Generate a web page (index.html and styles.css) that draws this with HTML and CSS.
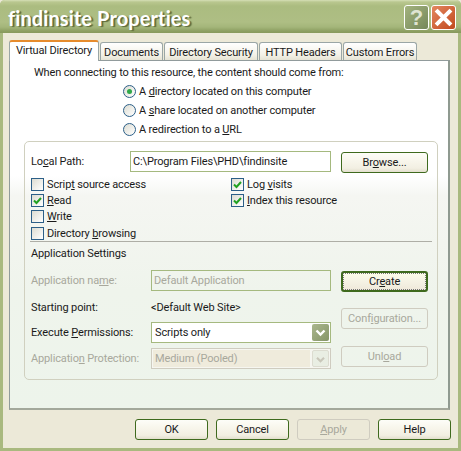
FILE: index.html
```html
<!DOCTYPE html>
<html lang="en">
<head>
    <meta charset="UTF-8">
    <meta name="viewport" content="width=device-width, initial-scale=1.0">
    <title>findinsite Properties</title>
    <link rel="stylesheet" href="styles.css">
</head>
<body>
    <div class="window">
        <div class="titlebar">
            <span class="title">findinsite Properties</span>
            <button class="cap-btn help-btn">?</button>
            <button class="cap-btn close-btn">
                <svg width="21" height="21" viewBox="0 0 21 21"><path d="M4.5 4.5 L16.5 16.5 M16.5 4.5 L4.5 16.5" stroke="#fff" stroke-width="4" stroke-linecap="square"/></svg>
            </button>
        </div>

        <div class="client">
            <div class="tabs">
                <div class="tab tab-virtual active">Virtual Directory</div>
                <div class="tab tab-docs">Documents</div>
                <div class="tab tab-security">Directory Security</div>
                <div class="tab tab-http">HTTP Headers</div>
                <div class="tab tab-errors">Custom Errors</div>
            </div>

            <div class="panel">
                <p class="intro">When connecting to this resource, the content should come from:</p>
                <div class="radios">
                    <label class="radio-row"><span class="radio checked"></span><span>A <u>d</u>irectory located on this computer</span></label>
                    <label class="radio-row"><span class="radio"></span><span>A <u>s</u>hare located on another computer</span></label>
                    <label class="radio-row"><span class="radio"></span><span>A redirection to a <u>U</u>RL</span></label>
                </div>

                <div class="group">
                    <div class="path-row">
                        <span class="path-label">Lo<u>c</u>al Path:</span>
                        <div class="field path-field">C:\Program Files\PHD\findinsite</div>
                        <button class="btn">Br<u>o</u>wse...</button>
                    </div>

                    <div class="checks">
                        <label class="check-row"><span class="check"></span><span>Scrip<u>t</u> source access</span></label>
                        <label class="check-row"><span class="check checked"><svg width="11" height="11" viewBox="0 0 11 11"><path d="M2 5.5 L4.5 8 L9 3" fill="none" stroke="#21a121" stroke-width="2"/></svg></span><span>Log <u>v</u>isits</span></label>
                        <label class="check-row"><span class="check checked"><svg width="11" height="11" viewBox="0 0 11 11"><path d="M2 5.5 L4.5 8 L9 3" fill="none" stroke="#21a121" stroke-width="2"/></svg></span><span><u>R</u>ead</span></label>
                        <label class="check-row"><span class="check checked"><svg width="11" height="11" viewBox="0 0 11 11"><path d="M2 5.5 L4.5 8 L9 3" fill="none" stroke="#21a121" stroke-width="2"/></svg></span><span><u>I</u>ndex this resource</span></label>
                        <label class="check-row"><span class="check"></span><span><u>W</u>rite</span></label>
                        <span></span>
                        <label class="check-row"><span class="check"></span><span>Directory <u>b</u>rowsing</span></label>
                    </div>

                    <div class="separator"></div>
                    <div class="group-title">Application Settings</div>

                    <div class="app-settings">
                        <div class="app-rows">
                            <div class="app-row row-name">
                                <span class="app-label disabled">Application na<u>m</u>e:</span>
                                <div class="field app-field disabled">Default Application</div>
                            </div>
                            <div class="app-row row-start">
                                <span class="app-label">Starting point:</span>
                                <span>&lt;Default Web Site&gt;</span>
                            </div>
                            <div class="app-row row-exec">
                                <span class="app-label">Execute <u>P</u>ermissions:</span>
                                <div class="field app-field select">
                                    <span>Scripts only</span>
                                    <span class="arrow"><svg width="17" height="17" viewBox="0 0 17 17"><path d="M4.5 6.5 L8.5 10.5 L12.5 6.5" fill="none" stroke="#fff" stroke-width="2.4"/></svg></span>
                                </div>
                            </div>
                            <div class="app-row row-prot">
                                <span class="app-label disabled">Applicatio<u>n</u> Protection:</span>
                                <div class="field app-field select locked">
                                    <span class="locked-value">Medium (Pooled)</span>
                                    <span class="arrow"><svg width="17" height="17" viewBox="0 0 17 17"><path d="M4.5 6.5 L8.5 10.5 L12.5 6.5" fill="none" stroke="#c9c7ba" stroke-width="2.4"/></svg></span>
                                </div>
                            </div>
                        </div>
                        <div class="app-buttons">
                            <button class="btn default">Cr<u>e</u>ate</button>
                            <button class="btn off">Conf<u>i</u>guration...</button>
                            <button class="btn off">Unl<u>o</u>ad</button>
                        </div>
                    </div>
                </div>
            </div>

            <div class="footer">
                <button class="btn foot-btn">OK</button>
                <button class="btn foot-btn">Cancel</button>
                <button class="btn foot-btn off"><u>A</u>pply</button>
                <button class="btn foot-btn">Help</button>
            </div>
        </div>
    </div>
</body>
</html>
```

FILE: styles.css
```css
* {
  box-sizing: border-box;
}

body {
  margin: 0;
  font-family: Roboto, "Liberation Sans", Arial, sans-serif;
  font-size: 11px;
  letter-spacing: -0.14px;
  color: #1a1a1a;
  background-color: #ece9d8;
}

u {
  text-underline-offset: 1px;
}

.window {
  width: 461px;
  height: 451px;
  display: flex;
  flex-direction: column;
  background-color: #a9b97f;
  border-radius: 5px 5px 0 0;
  overflow: hidden;
}

.titlebar {
  height: 33px;
  flex: none;
  display: flex;
  align-items: center;
  padding: 2px 5px 0 8px;
  background: linear-gradient(#d6dfb6 0, #b9c78f 2px, #abbc80 6px, #aebe84 22px, #a4b67a 27px, #8d9f62 31px, #87995c 33px);
}

.title {
  flex: 1;
  font-family: Lato, sans-serif;
  font-size: 20px;
  font-weight: 700;
  letter-spacing: 0.1px;
  font-variant-ligatures: none;
  color: #fff;
  text-shadow: 2px 1px 1px #5f6c3c;
}

.cap-btn {
  width: 25px;
  height: 25px;
  margin: 0 0 0 2px;
  padding: 0;
  display: flex;
  align-items: center;
  justify-content: center;
  border: 1px solid #fff;
  border-radius: 3px;
  color: #fff;
}

.help-btn {
  font-family: "Liberation Sans", Arial, sans-serif;
  font-size: 22px;
  font-weight: bold;
  color: #dfe4d2;
  background: linear-gradient(135deg, #a3b37e, #75875a);
}

.close-btn {
  background: linear-gradient(135deg, #e3875f, #c2491f);
}

.client {
  flex: 1;
  margin: 0 3px 3px;
  padding: 8px 0 0 6px;
  display: flex;
  flex-direction: column;
  background-color: #ece9d8;
}

.tabs {
  height: 19px;
  display: flex;
  align-items: flex-end;
  position: relative;
  z-index: 1;
}

.tab {
  height: 18px;
  margin-right: 1px;
  padding-top: 1px;
  display: flex;
  align-items: center;
  justify-content: center;
  background: linear-gradient(#fff, #f3f1e7 70%, #e6e3d4);
  border: 1px solid #9aa6a6;
  border-bottom: none;
  border-radius: 3px 3px 0 0;
}

.tab-virtual {
  width: 90px;
}

.tab-docs {
  width: 63px;
}

.tab-security {
  width: 94px;
}

.tab-http {
  width: 83px;
}

.tab-errors {
  width: 74px;
}

.tab.active {
  height: 21px;
  margin-bottom: -1px;
  padding-top: 0;
  padding-bottom: 3px;
  background: #fff;
  border-top: 2px solid #e68b2c;
}

.panel {
  width: 441px;
  height: 350px;
  padding: 5px 0 0 14px;
  background: linear-gradient(#fff 0, #fff 115px, #f5f6f2 135px, #eff4ec 230px, #edf4eb 100%);
  border: 1px solid #919b9c;
  border-right: 2px solid #8f9a90;
  border-bottom: 2px solid #a3a89b;
}

.intro {
  margin: 0 0 2px 10px;
  height: 14px;
  line-height: 14px;
}

.radios {
  margin-left: 99px;
}

.radio-row {
  height: 19px;
  display: flex;
  align-items: center;
}

.radio {
  width: 13px;
  height: 13px;
  margin-right: 3px;
  display: flex;
  align-items: center;
  justify-content: center;
  border: 1px solid #2c5f88;
  border-radius: 50%;
  background: linear-gradient(135deg, #dcdcd2, #fff);
}

.radio.checked::after {
  content: "";
  width: 5px;
  height: 5px;
  border-radius: 50%;
  background-color: #2fa84a;
}

.group {
  width: 414px;
  height: 239px;
  margin-top: 2px;
  padding: 9px 5px 0 6px;
  border: 1px solid #d0d0bf;
  border-radius: 5px;
}

.path-row {
  height: 22px;
  display: flex;
  align-items: flex-start;
}

.path-label {
  width: 99px;
  line-height: 21px;
}

.field {
  height: 21px;
  padding: 0 2px;
  display: flex;
  align-items: center;
  background-color: #fff;
  border: 1px solid #a5b97f;
}

.path-field {
  width: 201px;
  margin-right: 10px;
}

.btn {
  width: 87px;
  height: 21px;
  padding: 0;
  font-family: inherit;
  font-size: inherit;
  letter-spacing: inherit;
  color: #1a1a1a;
  background: linear-gradient(#fdfdf8 0, #f8f6ec 40%, #f2efe2 80%, #e3dfce 100%);
  border: 1px solid #3f6a1e;
  border-radius: 3px;
}

.path-row .btn {
  margin-top: 1px;
}

.btn.default {
  border-width: 2px;
  outline: 1px dotted #777;
  outline-offset: -3px;
  background: linear-gradient(#fdfde8 0, #f5f2e4 50%, #efe9da 100%);
}

.btn.off {
  color: #a8a89c;
  background: transparent;
  border-color: #cfccc0;
}

.checks {
  margin-top: 3px;
  display: grid;
  grid-template-columns: 200px 1fr;
  grid-auto-rows: 16.33px;
}

.check-row {
  display: flex;
  align-items: center;
}

.check {
  width: 13px;
  height: 13px;
  margin-right: 3px;
  display: flex;
  align-items: center;
  justify-content: center;
  border: 1px solid #2c5f88;
  background: linear-gradient(135deg, #dcdcd2, #fff);
}

.separator {
  width: 402px;
  height: 1px;
  margin: 0 0 0 -1px;
  background-color: #aeaea6;
}

.group-title {
  height: 14px;
  margin-top: 5px;
  line-height: 14px;
}

.app-settings {
  margin-top: 9px;
  display: flex;
  gap: 10px;
}

.app-rows {
  width: 300px;
}

.app-row {
  display: flex;
  align-items: center;
}

.row-name {
  height: 21px;
}

.row-start {
  height: 18px;
  margin-top: 7px;
}

.row-exec {
  height: 21px;
  margin-top: 6px;
}

.row-prot {
  height: 21px;
  margin-top: 5px;
}

.app-label {
  width: 120px;
}

.disabled {
  color: #a8a89c;
}

.app-field {
  width: 180px;
}

.app-field.disabled {
  background: transparent;
}

.select {
  justify-content: space-between;
  padding: 0 1px 0 3px;
}

.arrow {
  width: 17px;
  height: 17px;
  display: flex;
  background: linear-gradient(135deg, #aab68d, #859568);
  border-radius: 2px;
}

.locked {
  padding: 1px;
  background-color: #f6f6f0;
  border-color: #cfccc0;
  color: #a8a89c;
}

.locked-value {
  width: 157px;
  height: 17px;
  padding-left: 2px;
  line-height: 17px;
  background-color: #efebdc;
}

.locked .arrow {
  background: #e9eee3;
  border: 1px solid #dcdcd0;
}

.app-buttons {
  display: flex;
  flex-direction: column;
}

.app-buttons .btn {
  margin-top: 1px;
}

.app-buttons .btn + .btn {
  margin-top: 16px;
}

.app-buttons .btn + .btn + .btn {
  margin-top: 17px;
}

.footer {
  margin-top: 9px;
  padding-left: 126px;
  display: flex;
  gap: 8px;
}

.foot-btn {
  width: 73px;
}
```
